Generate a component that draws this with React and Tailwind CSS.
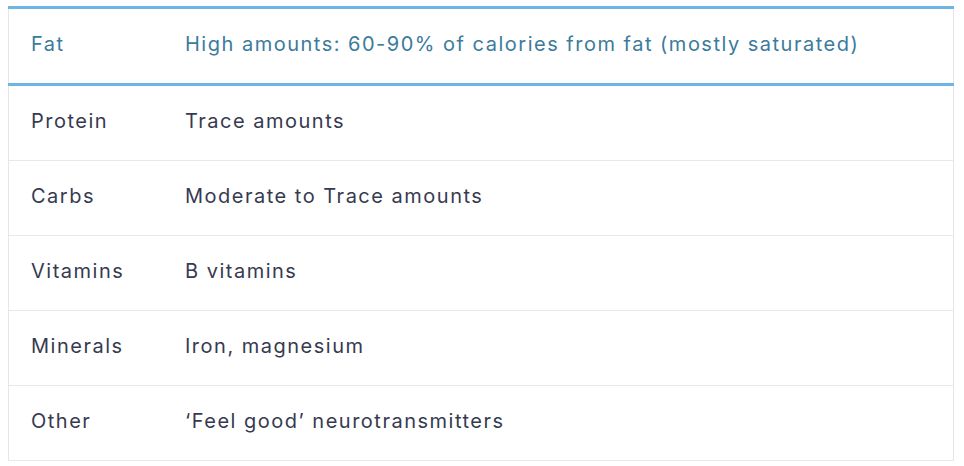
export default function App() {
  const rows = [
    ["Protein", "Trace amounts"],
    ["Carbs", "Moderate to Trace amounts"],
    ["Vitamins", "B vitamins"],
    ["Minerals", "Iron, magnesium"],
    ["Other", "\u2018Feel good\u2019 neurotransmitters"],
  ];
  return (
    <div className="bg-white w-[964px] h-[466px] pt-[6px] pl-[8px]" style={{ fontFamily: "Inter, 'Noto Sans', sans-serif" }}>
      <div className="w-[946px] border-x border-[#e6e6e6] text-[20px] tracking-[1.5px]">
        <div className="border-t-[3px] border-b-[3px] border-[#6db6e4] -mx-px px-px">
          <div className="grid grid-cols-[176px_1fr] h-[74px] items-center text-[#3b7b9b] pb-[4px]">
            <div className="pl-[22px]">Fat</div>
            <div>High amounts: 60-90% of calories from fat (mostly saturated)</div>
          </div>
        </div>
        {rows.map(([a, b]) => (
          <div key={a} className="grid grid-cols-[176px_1fr] h-[75px] items-center border-b border-[#e8e8e8] text-[#363a50] pb-[5px]">
            <div className="pl-[22px]">{a}</div>
            <div>{b}</div>
          </div>
        ))}
      </div>
    </div>
  );
}
